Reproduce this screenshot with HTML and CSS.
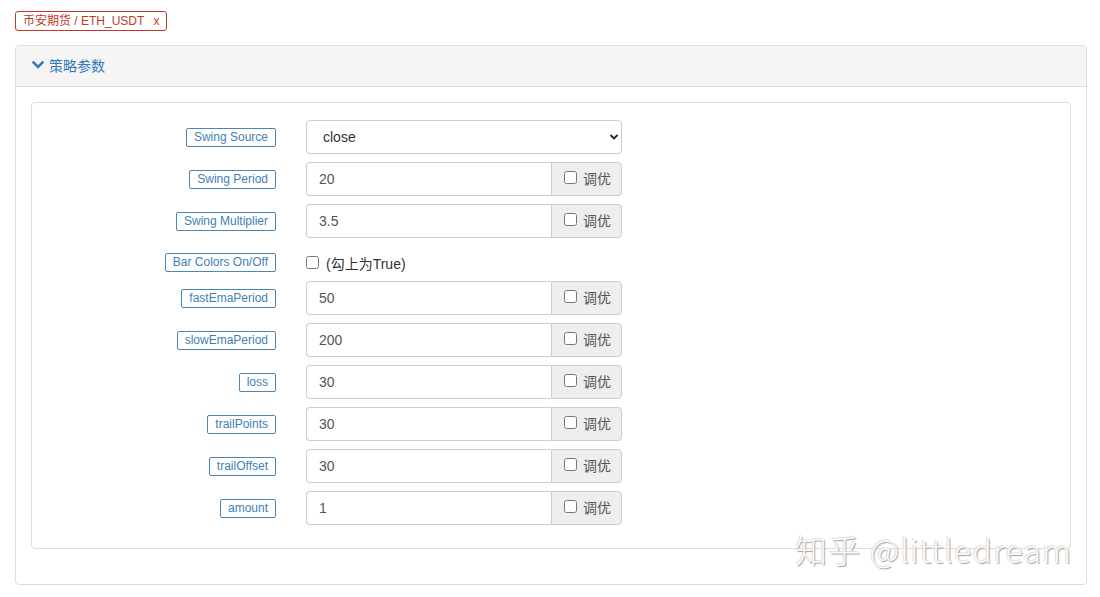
FILE: index.html
```html
<!DOCTYPE html>
<html lang="zh">
<head>
<meta charset="utf-8">
<title>策略参数</title>
<link rel="stylesheet" href="styles.css">
</head>
<body>
<span class="tag">币安期货 / ETH_USDT <span class="tag-x">x</span></span>

<div class="panel">
  <div class="panel-heading">
    <svg class="chev" width="12" height="10" viewBox="0 0 12 10"><path d="M1.5 2.5 L6 7 L10.5 2.5" fill="none" stroke="#337ab7" stroke-width="2.6" stroke-linecap="square"/></svg>
    <span>策略参数</span>
  </div>
  <div class="panel-body">
    <div class="form-box">
      <div class="row">
        <div class="lbl"><span class="badge">Swing Source</span></div>
        <div class="select-wrap">
          <select class="select"><option>close</option></select>
          <svg class="caret" width="10" height="8" viewBox="0 0 10 8"><path d="M1.5 2 L5 5.5 L8.5 2" fill="none" stroke="#222" stroke-width="1.8"/></svg>
        </div>
      </div>
      <div class="row">
        <div class="lbl"><span class="badge">Swing Period</span></div>
        <div class="group"><input class="inp" value="20"><label class="addon"><input type="checkbox" class="cb"> 调优</label></div>
      </div>
      <div class="row">
        <div class="lbl"><span class="badge">Swing Multiplier</span></div>
        <div class="group"><input class="inp" value="3.5"><label class="addon"><input type="checkbox" class="cb"> 调优</label></div>
      </div>
      <div class="row row-check">
        <div class="lbl"><span class="badge">Bar Colors On/Off</span></div>
        <label class="check"><input type="checkbox" class="cb"> (勾上为True)</label>
      </div>
      <div class="row">
        <div class="lbl"><span class="badge">fastEmaPeriod</span></div>
        <div class="group"><input class="inp" value="50"><label class="addon"><input type="checkbox" class="cb"> 调优</label></div>
      </div>
      <div class="row">
        <div class="lbl"><span class="badge">slowEmaPeriod</span></div>
        <div class="group"><input class="inp" value="200"><label class="addon"><input type="checkbox" class="cb"> 调优</label></div>
      </div>
      <div class="row">
        <div class="lbl"><span class="badge">loss</span></div>
        <div class="group"><input class="inp" value="30"><label class="addon"><input type="checkbox" class="cb"> 调优</label></div>
      </div>
      <div class="row">
        <div class="lbl"><span class="badge">trailPoints</span></div>
        <div class="group"><input class="inp" value="30"><label class="addon"><input type="checkbox" class="cb"> 调优</label></div>
      </div>
      <div class="row">
        <div class="lbl"><span class="badge">trailOffset</span></div>
        <div class="group"><input class="inp" value="30"><label class="addon"><input type="checkbox" class="cb"> 调优</label></div>
      </div>
      <div class="row">
        <div class="lbl"><span class="badge">amount</span></div>
        <div class="group"><input class="inp" value="1"><label class="addon"><input type="checkbox" class="cb"> 调优</label></div>
      </div>
    </div>
  </div>
</div>

<div class="watermark">知乎 @littledream</div>
</body>
</html>
```

FILE: styles.css
```css
* { box-sizing: border-box; }
html, body { margin: 0; }
body {
  padding: 11px 14px 0 15px;
  font-family: "Liberation Sans", "Noto Sans CJK SC", Arial, sans-serif;
  font-size: 14px;
  color: #333;
  background: #fff;
  position: relative;
  height: 597px;
  overflow: hidden;
}
.tag {
  display: inline-block;
  height: 20px;
  line-height: 18px;
  padding: 0 7px 0 7px;
  border: 1px solid #c0392b;
  border-radius: 3px;
  color: #c0392b;
  font-size: 12px;
}
.tag-x { margin-left: 6px; }
.panel {
  margin-top: 14px;
  border: 1px solid #ddd;
  border-radius: 4px;
  width: 1072px;
}
.panel-heading {
  height: 41px;
  background: #f5f5f5;
  border-bottom: 1px solid #ddd;
  display: flex;
  align-items: center;
  padding: 0 16px 3px 16px;
  color: #337ab7;
  font-size: 14px;
  border-radius: 3px 3px 0 0;
}
.chev { margin-right: 5px; }
.panel-body { padding: 15px 15px 15px 15px; }
.form-box {
  border: 1px solid #ddd;
  border-radius: 4px;
  padding: 17px 0 15px 0;
  margin-bottom: 20px;
}
.row {
  display: grid;
  grid-template-columns: 244px 316px;
  column-gap: 30px;
  align-items: center;
  margin-bottom: 8px;
}
.row-check { height: 27px; padding-top: 6px; }
.lbl { text-align: right; }
.badge {
  display: inline-block;
  border: 1px solid #4a87b8;
  border-radius: 2px;
  color: #3f7fb5;
  font-size: 12px;
  line-height: 17px;
  padding: 0 7px;
}
.select-wrap { position: relative; height: 34px; }
.select {
  appearance: none;
  -webkit-appearance: none;
  width: 100%;
  height: 34px;
  border: 1px solid #ccc;
  border-radius: 4px;
  background: #fff;
  padding: 0 16px;
  font-family: "Liberation Sans", Arial, sans-serif;
  font-size: 14px;
  color: #333;
}
.caret { position: absolute; right: 3px; top: 13px; }
.group { display: flex; height: 34px; }
.inp {
  width: 245px;
  height: 34px;
  border: 1px solid #ccc;
  border-right: none;
  border-radius: 4px 0 0 4px;
  padding: 0 12px;
  font-family: "Liberation Sans", Arial, sans-serif;
  font-size: 14px;
  color: #555;
  outline: none;
}
.addon {
  width: 71px;
  height: 34px;
  background: #eee;
  border: 1px solid #ccc;
  border-radius: 0 4px 4px 0;
  display: flex;
  align-items: center;
  padding-left: 12px;
  padding-bottom: 2px;
  color: #555;
  font-size: 14px;
  white-space: nowrap;
}
.cb {
  width: 13px;
  height: 13px;
  margin: 0 6px 0 0;
  position: relative;
  top: -1px;
}
.check {
  display: flex;
  align-items: center;
  font-size: 14px;
  color: #333;
}
.check .cb { top: 0; margin-right: 7px; }
.watermark {
  position: absolute;
  left: 795px;
  top: 526px;
  font-family: "Noto Sans CJK SC", "Noto Sans", sans-serif;
  font-weight: 300;
  font-size: 32px;
  letter-spacing: 1.3px;
  color: #fafafa;
  text-shadow: 1px 1px 1px #a0a0a0, -1px -1px 0 #e2e2e2;
  white-space: nowrap;
}
```
